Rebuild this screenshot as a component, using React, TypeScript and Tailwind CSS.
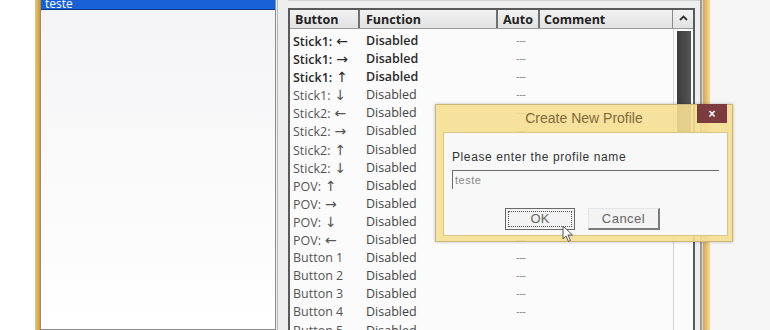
import React from 'react'

const rows = [
  { name: 'Stick1:', arrow: '←', strong: true },
  { name: 'Stick1:', arrow: '→', strong: true },
  { name: 'Stick1:', arrow: '↑', strong: true },
  { name: 'Stick1:', arrow: '↓' },
  { name: 'Stick2:', arrow: '←' },
  { name: 'Stick2:', arrow: '→' },
  { name: 'Stick2:', arrow: '↑' },
  { name: 'Stick2:', arrow: '↓' },
  { name: 'POV:', arrow: '↑' },
  { name: 'POV:', arrow: '→' },
  { name: 'POV:', arrow: '↓' },
  { name: 'POV:', arrow: '←' },
  { name: 'Button 1' },
  { name: 'Button 2' },
  { name: 'Button 3' },
  { name: 'Button 4' },
  { name: 'Button 5' },
]

const ui = { fontFamily: '"Open Sans", "DejaVu Sans", sans-serif' }
const dlg = { fontFamily: '"Liberation Sans", "DejaVu Sans", sans-serif' }
const arrowFont = { fontFamily: '"DejaVu Sans", sans-serif' }

export default function App() {
  return (
    <div className="relative w-[770px] h-[330px] overflow-hidden bg-white flex" style={ui}>
      <div className="w-[35px] shrink-0 bg-white" />
      <div className="w-[5px] shrink-0 bg-gradient-to-r from-[#f0c766] to-[#c99a3e]" />

      {/* window body */}
      <div className="w-[660px] shrink-0 bg-[#eeeeee] flex">
        {/* profile list */}
        <div className="w-[236px] h-full border border-[#8d8d8d] border-t-0 bg-gradient-to-b from-[#f4f4f6] to-white">
          <div className="h-[10px] bg-[#1861d6] border-b border-[#0d3c8a] text-white text-[12px] leading-[8px] pl-[4px] overflow-hidden">
            teste
          </div>
        </div>

        <div className="w-[11px] shrink-0 border-l border-[#b9b9b9] ml-[1px]" />

        {/* button table */}
        <div className="flex-1 pt-[7px] pr-[5px] border-t border-[#d0d0d0]">
          <div className="h-full border-2 border-b-0 border-[#5a5a5a] bg-[#fbfbfb] flex flex-col">
            <div className="h-[19px] shrink-0 flex bg-gradient-to-b from-[#f2f2f2] to-[#e2e2e2] border-b border-[#9a9a9a] text-[12.5px] font-bold text-[#222] leading-[19px]">
              <div className="w-[70px] pl-[5px] border-r-2 border-[#707070]">Button</div>
              <div className="w-[138px] pl-[6px] border-r-2 border-[#707070]">Function</div>
              <div className="w-[42px] pl-[5px] border-r-2 border-[#707070]">Auto</div>
              <div className="w-[133px] pl-[4px] border-r border-[#8a8a8a]">Comment</div>
              <div className="flex-1 flex justify-center">
                <svg width="9" height="6" viewBox="0 0 9 6" className="mt-[5px]">
                  <path d="M1 5 L4.5 1.5 L8 5" stroke="#333" strokeWidth="1.8" fill="none" />
                </svg>
              </div>
            </div>
            <div className="flex-1 flex">
              <div className="w-[383px] pt-[3px]">
                {rows.map((r, i) => (
                  <div key={i} className="h-[18.1px] flex text-[12.5px] leading-[18px]">
                    <div
                      className={`w-[72px] pl-[3px] whitespace-nowrap ${r.strong ? 'font-semibold text-[#2a2a2a]' : 'text-[#555]'}`}
                    >
                      {r.name}
                      {r.arrow && (
                        <span className="ml-[4px] font-normal text-[14px]" style={arrowFont}>
                          {r.arrow}
                        </span>
                      )}
                    </div>
                    <div className={`w-[138px] pl-[4px] ${r.strong ? 'font-semibold text-[#2a2a2a]' : 'text-[#444]'}`}>
                      Disabled
                    </div>
                    <div className="w-[42px] text-center text-[10px] text-[#777] leading-[16px]">---</div>
                  </div>
                ))}
              </div>
              <div className="flex-1 flex justify-center pt-[2px] border-l border-[#d6d6d6]">
                <div className="w-[14px] h-[104px] bg-gradient-to-r from-[#3c3c3c] to-[#555]" />
              </div>
            </div>
          </div>
        </div>
      </div>

      <div className="w-[3px] shrink-0 bg-[#9b9b9b] border-r border-[#dcdcdc]" />
      <div className="w-[7px] shrink-0 bg-gradient-to-r from-[#d9a43e] to-[#f3d9a6]" />
      <div className="flex-1 bg-[#f6f6f6]" />

      {/* Create New Profile dialog */}
      <div
        className="absolute left-[435px] top-[104px] w-[298px] h-[138px] bg-[#f5de92]/90 border border-[#c9b878] shadow-[0_0_3px_rgba(0,0,0,0.25)] flex flex-col"
        style={dlg}
      >
        <div className="h-[27px] shrink-0 relative flex items-center justify-center">
          <span className="text-[14px] text-[#806a3c]">Create New Profile</span>
          <div className="absolute right-[5px] top-[-1px] w-[30px] h-[19px] bg-[#7c3b3e] flex items-center justify-center">
            <span className="text-white text-[12px] font-bold leading-none">×</span>
          </div>
        </div>
        <div className="flex-1 mx-[7px] mb-[5px] mr-[4px] bg-[#f8f8f8] border border-[#d8c78a] px-[8px] pt-[15px]">
          <div className="text-[12px] text-[#333] tracking-[0.6px]">Please enter the profile name</div>
          <div className="mt-[4px] h-[19px] border-t border-l border-[#6d6d6d] text-[11px] text-[#8a8a8a] pl-[2px] leading-[18px] tracking-[0.5px]">
            teste
          </div>
          <div className="mt-[19px] flex gap-[13px] pl-[53px]">
            <div className="relative w-[70px] h-[22px] border border-[#6a6a6a] bg-[#f3f3f3] p-[2px]">
              <div className="h-full border border-dotted border-[#555] flex items-center justify-center text-[13px] text-[#666]">
                OK
              </div>
            </div>
            <div className="w-[72px] h-[22px] border-r-2 border-b-2 border-[#7a7a7a] border-l border-t border-l-[#e6e6e6] border-t-[#e6e6e6] bg-[#f3f3f3] flex items-center justify-center text-[13px] text-[#666] tracking-[0.5px]">
              Cancel
            </div>
          </div>
        </div>
      </div>

      {/* mouse pointer */}
      <svg className="absolute left-[562px] top-[225px]" width="12" height="18" viewBox="0 0 12 18">
        <path d="M1 1 L1 14 L4 11 L6.5 16.5 L8.5 15.5 L6 10 L10.5 10 Z" fill="#fff" stroke="#555" strokeWidth="1" />
      </svg>
    </div>
  )
}
